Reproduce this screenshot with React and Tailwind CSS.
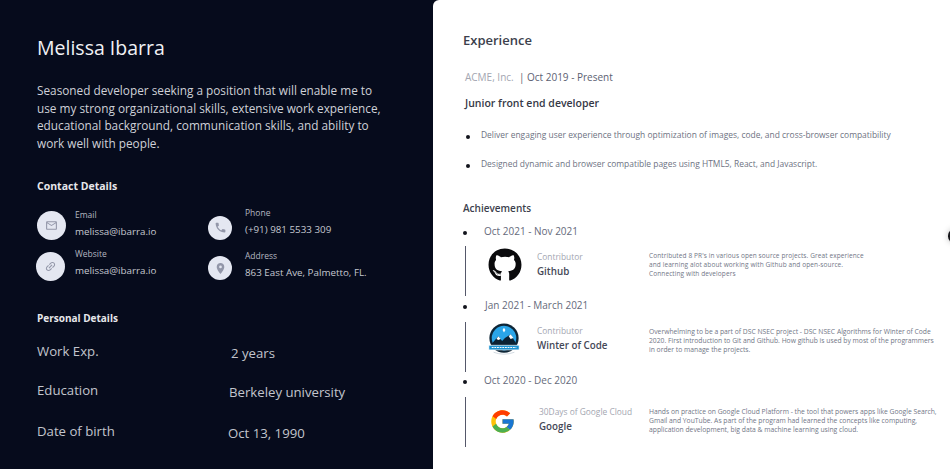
import React from "react";
import { FaGithub } from "react-icons/fa";
import { FcGoogle } from "react-icons/fc";
import { MdOutlineEmail, MdPhone, MdLink, MdLocationOn } from "react-icons/md";

const ContactItem = ({ icon, label, value, className, size = "w-[29px] h-[29px]", gap = "gap-[9px]", textClass }) => (
  <div className={`flex items-center ${gap} ${className}`}>
    <div className={`${size} rounded-full bg-[#e4e7f1] flex items-center justify-center text-[#9296a8] text-[13px] shrink-0`}>
      {icon}
    </div>
    <div className={textClass}>
      <p className="text-[8.5px] leading-[12px] mb-[4px] text-[#b4b7c0]">{label}</p>
      <p className="text-[9.8px] leading-[14px] text-[#c5c8d0] whitespace-nowrap">{value}</p>
    </div>
  </div>
);

const WinterLogo = () => (
  <svg viewBox="0 0 36 36" className="w-[34px] h-[34px]">
    <circle cx="18" cy="16" r="15.5" fill="#0d2536" />
    <circle cx="18" cy="16" r="13" fill="#2aa5e8" />
    <path d="M5 22 L12 14 L16 19 L19 16 L25 12 L31 22 L28 28 L8 28 Z" fill="#0b2233" />
    <path d="M10 17 L12 14 L14.5 17 L12 18 Z M23 14 L25 12 L28 16 L25 17 Z" fill="#ffffff" />
    <path d="M18 5 l1.5 2.5 l-1.5 2.5 l-1.5 -2.5 Z" fill="#ffffff" />
    <rect x="2" y="23.5" width="32" height="5" fill="#1b92d1" stroke="#ffffff" strokeWidth="0.7" />
    <path d="M5 26 H31" stroke="#ffffff" strokeWidth="1.2" strokeDasharray="2 0.8" />
    <path d="M7 31 Q18 35 29 31" stroke="#cfd8df" strokeWidth="1" fill="none" />
  </svg>
);

const achievements = [
  {
    date: "Oct 2021 - Nov 2021",
    role: "Contributor",
    name: "Github",
    logo: <FaGithub className="text-[34px] text-[#0b0b0d]" />,
    lines: [
      "Contributed 8 PR's in various open source projects. Great experience",
      "and learning alot about working with Github and open-source.",
      "Connecting with developers",
    ],
    dateClass: "ml-[17px]",
    rowClass: "mt-[6px]",
    logoClass: "w-[71px] pt-[2px] pl-[6px]",
    infoClass: "w-[112px] pt-[4px]",
    textClass: "pt-[5px] text-[6.5px] tracking-[0.1px]",
  },
  {
    date: "Jan 2021 - March 2021",
    role: "Contributor",
    name: "Winter of Code",
    logo: <WinterLogo />,
    lines: [
      "Overwhelming to be a part of DSC NSEC project - DSC NSEC Algorithms for Winter of Code",
      "2020. First introduction to Git and Github. How github is used by most of the programmers",
      "in order to manage the projects.",
    ],
    dateClass: "ml-[18px]",
    rowClass: "mt-[8px] -mb-[1px]",
    logoClass: "w-[71px] pt-[1px] pl-[4px]",
    infoClass: "w-[112px] pt-[2px]",
    textClass: "pt-[5px] text-[6.75px]",
  },
  {
    date: "Oct 2020 - Dec 2020",
    role: "30Days of Google Cloud",
    name: "Google",
    logo: <FcGoogle className="text-[27px]" />,
    lines: [
      "Hands on practice on Google Cloud Platform - the tool that powers apps like Google Search,",
      "Gmail and YouTube. As part of the program had learned the concepts like computing,",
      "application development, big data & machine learning using cloud.",
    ],
    dateClass: "ml-[17px]",
    rowClass: "mt-[8px]",
    logoClass: "w-[73px] pt-[11px]",
    infoClass: "w-[110px] pt-[8px]",
    textClass: "pt-[10px] text-[6.75px]",
  },
];

const personal = [
  { label: "Work Exp.", value: "2 years", valueClass: "ml-[194px]", rowClass: "mt-[16px]" },
  { label: "Education", value: "Berkeley university", valueClass: "ml-[192px]", rowClass: "mt-[17px]" },
  { label: "Date of birth", value: "Oct 13, 1990", valueClass: "ml-[191px]", rowClass: "mt-[19px]" },
];

export default function App() {
  return (
    <div className="relative flex w-[950px] h-[469px] overflow-hidden bg-[#060b1c] font-['Open_Sans',sans-serif]">
      <div className="w-[433px] h-full shrink-0 pl-[37px] pt-[34px] text-white">
        <h1 className="text-[19.5px] leading-[28px] font-medium text-[#f1f2f5]">Melissa Ibarra</h1>
        <p className="mt-[20px] w-[350px] text-[11.8px] leading-[17.5px] text-[#cfd1d8]">
          Seasoned developer seeking a position that will enable me to use my strong organizational skills, extensive
          work experience, educational background, communication skills, and ability to work well with people.
        </p>
        <h2 className="mt-[27px] text-[10.5px] leading-[14px] font-bold text-[#e6e7eb]">Contact Details</h2>

        <div className="flex mt-[18px] h-[29px]">
          <ContactItem
            className="w-[171px]"
            textClass="-mt-[4px]"
            icon={<MdOutlineEmail />}
            label="Email"
            value="melissa@ibarra.io"
          />
          <ContactItem
            className="mt-[4px]"
            size="w-[24px] h-[24px]"
            gap="gap-[13px]"
            textClass="-mt-[12px]"
            icon={<MdPhone />}
            label="Phone"
            value="(+91) 981 5533 309"
          />
        </div>
        <div className="flex mt-[12px] h-[29px]">
          <ContactItem
            className="w-[172px] -ml-[1px]"
            gap="gap-[10px]"
            textClass="-mt-[7px]"
            icon={<MdLink className="-rotate-45" />}
            label="Website"
            value="melissa@ibarra.io"
          />
          <ContactItem
            className="mt-[3px]"
            size="w-[24px] h-[24px]"
            gap="gap-[13px]"
            textClass="-mt-[6px]"
            icon={<MdLocationOn />}
            label="Address"
            value="863 East Ave, Palmetto, FL."
          />
        </div>

        <h2 className="mt-[30px] text-[10px] leading-[14px] font-bold text-[#e6e7eb]">Personal Details</h2>
        {personal.map((row) => (
          <div key={row.label} className={`flex text-[13.2px] leading-[20px] text-[#c2c5cd] ${row.rowClass}`}>
            <span className="w-0 whitespace-nowrap">{row.label}</span>
            <span className={`whitespace-nowrap mt-[2px] ${row.valueClass}`}>{row.value}</span>
          </div>
        ))}
      </div>

      <div className="flex-1 h-full bg-white rounded-tl-[6px] pl-[30px] pt-[31px] overflow-hidden">
        <h2 className="text-[13px] leading-[18px] font-semibold text-[#3c3f4d]">Experience</h2>
        <p className="mt-[21px] ml-[2px] text-[10px] leading-[14px] text-[#5c6172] whitespace-nowrap">
          <span className="text-[#a3a6b1]">ACME, Inc.</span> &nbsp;| Oct 2019 - Present
        </p>
        <h3 className="mt-[12px] ml-[2px] text-[10.5px] leading-[14px] font-semibold text-[#353846]">
          Junior front end developer
        </h3>
        <ul className="mt-[19px] ml-[3px]">
          <li className="flex items-center gap-[11px] text-[8.45px] leading-[12px] text-[#6d7282]">
            <span className="w-[4px] h-[4px] rounded-full bg-[#12141c] mt-[3px]"></span>
            Deliver engaging user experience through optimization of images, code, and cross-browser compatibility
          </li>
          <li className="flex items-center gap-[11px] mt-[17px] text-[8.45px] leading-[12px] text-[#6d7282]">
            <span className="w-[4px] h-[4px] rounded-full bg-[#12141c] mt-[3px]"></span>
            Designed dynamic and browser compatible pages using HTML5, React, and Javascript.
          </li>
        </ul>

        <h3 className="mt-[31px] text-[10px] leading-[14px] font-semibold text-[#3c3f4d]">Achievements</h3>
        <div className="mt-[7px]">
          {achievements.map((item) => (
            <div key={item.date}>
              <div className="flex items-center h-[18px]">
                <span className="w-[4px] h-[4px] rounded-full bg-[#12141c] mt-[4px]"></span>
                <span className={`${item.dateClass} text-[10px] text-[#656a7b] whitespace-nowrap`}>{item.date}</span>
              </div>
              <div className={`flex h-[50px] ml-[2px] border-l border-[#55586a] ${item.rowClass}`}>
                <div className={`flex justify-center shrink-0 ${item.logoClass}`}>{item.logo}</div>
                <div className={`shrink-0 ${item.infoClass}`}>
                  <p className="text-[8.4px] leading-[13px] text-[#a3a6b1] mb-[2px] whitespace-nowrap">{item.role}</p>
                  <p className="text-[9.8px] leading-[14px] font-semibold text-[#454857]">{item.name}</p>
                </div>
                <div className={`${item.textClass} leading-[9.1px] text-[#717686] whitespace-nowrap`}>
                  {item.lines.map((line) => (
                    <p key={line}>{line}</p>
                  ))}
                </div>
              </div>
            </div>
          ))}
        </div>
      </div>

      <div className="absolute right-[-11px] top-[229px] w-[13px] h-[14px] rounded-full bg-[#15151a] shadow-[0_0_6px_rgba(0,0,0,0.25)]"></div>
    </div>
  );
}
